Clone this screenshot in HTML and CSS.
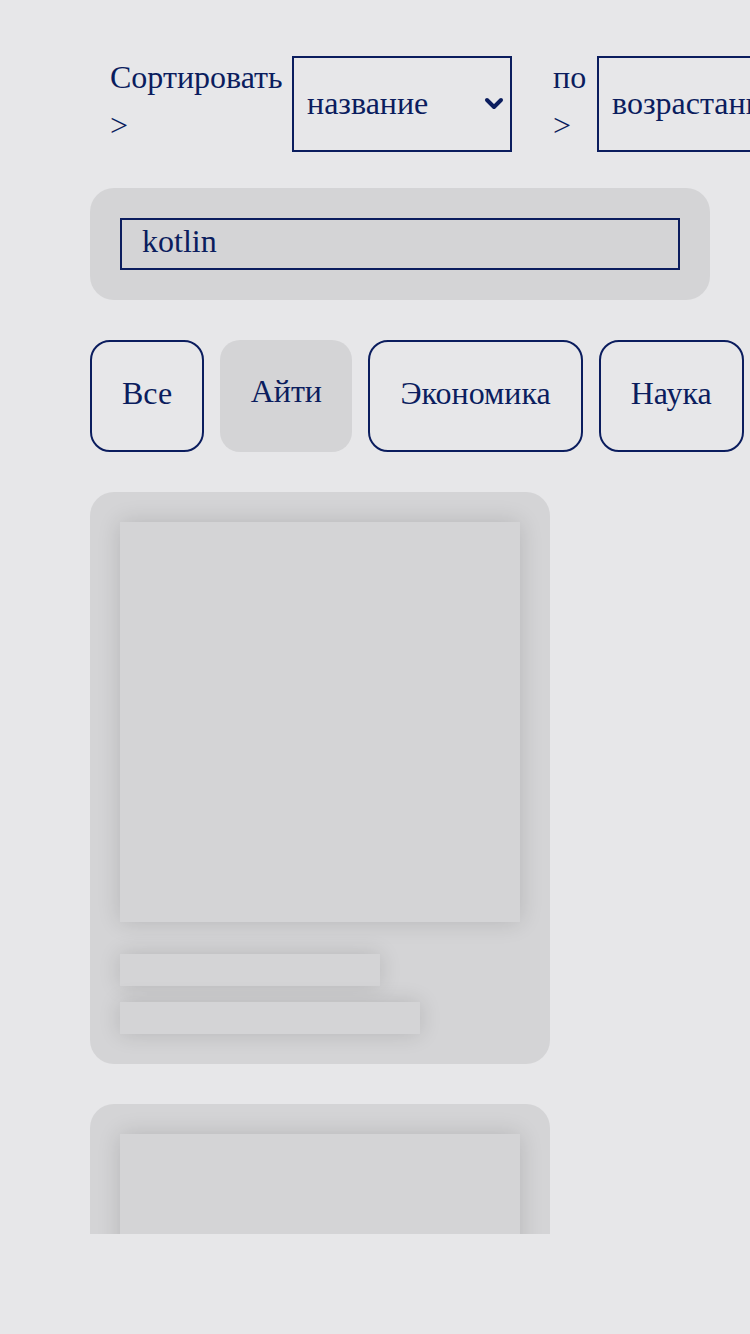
FILE: index.html
```html
<!DOCTYPE html>
<html lang="ru">
<head>
<meta charset="utf-8">
<title>Каталог</title>
<link rel="stylesheet" href="styles.css">
</head>
<body>
<div class="page">
  <div class="sort-row">
    <label class="sort-label">Сортировать &gt;</label>
    <div class="select-wrap">
      <select class="sort-select">
        <option>название</option>
      </select>
      <svg class="chevron" width="20" height="14" viewBox="0 0 20 14"><polyline points="3,3 10,10 17,3" fill="none" stroke="#0b1d5e" stroke-width="4" stroke-linecap="round" stroke-linejoin="round"/></svg>
    </div>
    <label class="sort-label sort-label--second">по &gt;</label>
    <div class="select-wrap">
      <select class="sort-select">
        <option>возрастанию</option>
      </select>
    </div>
  </div>

  <div class="search">
    <input class="search-input" type="text" value="kotlin">
  </div>

  <div class="chips">
    <button class="chip">Все</button>
    <button class="chip chip--active">Айти</button>
    <button class="chip">Экономика</button>
    <button class="chip">Наука</button>
  </div>

  <div class="card">
    <div class="card-image"></div>
    <div class="card-line card-line--short"></div>
    <div class="card-line card-line--long"></div>
  </div>

  <div class="card">
    <div class="card-image"></div>
    <div class="card-line card-line--short"></div>
    <div class="card-line card-line--long"></div>
  </div>
</div>
</body>
</html>
```

FILE: styles.css
```css
html, body {
  margin: 0;
  padding: 0;
  background: #e7e7e9;
  overflow: hidden;
}

body {
  font-family: "Liberation Serif", "Times New Roman", serif;
  font-size: 32px;
  color: #0b1d5e;
  width: 750px;
  height: 1334px;
}

.page {
  box-sizing: border-box;
  height: 1234px;
  overflow: hidden;
  padding: 56px 0 0 90px;
}

.sort-row {
  display: flex;
  align-items: flex-start;
  width: 900px;
}

.sort-label {
  display: block;
  line-height: 48px;
  margin: -3px 9px 0 20px;
  width: 173px;
  flex-shrink: 0;
}

.sort-label--second {
  width: 34px;
  margin: -3px 10px 0 41px;
}

.select-wrap {
  position: relative;
  flex-shrink: 0;
}

.sort-select {
  -webkit-appearance: none;
  appearance: none;
  box-sizing: border-box;
  width: 220px;
  height: 96px;
  border: 2px solid #0b1d5e;
  border-radius: 0;
  background: transparent;
  font-family: inherit;
  font-size: 32px;
  color: #0b1d5e;
  padding: 0 12px 2px 13px;
  margin: 0;
}

.chevron {
  position: absolute;
  right: 8px;
  top: 41px;
  pointer-events: none;
}

.search {
  box-sizing: border-box;
  width: 620px;
  margin-top: 36px;
  padding: 30px;
  background: #d4d4d6;
  border-radius: 24px;
}

.search-input {
  box-sizing: border-box;
  display: block;
  width: 100%;
  height: 52px;
  border: 2px solid #0b1d5e;
  background: transparent;
  font-family: inherit;
  font-size: 32px;
  color: #0b1d5e;
  padding: 0 20px 6px;
  margin: 0;
  outline: none;
}

.chips {
  display: flex;
  gap: 16px;
  margin-top: 40px;
  width: 700px;
}

.chip {
  flex-shrink: 0;
  box-sizing: border-box;
  height: 112px;
  padding: 0 30px 6px;
  border: 2px solid #0b1d5e;
  border-radius: 20px;
  background: transparent;
  font-family: inherit;
  font-size: 32px;
  color: #0b1d5e;
}

.chip--active {
  border: none;
  background: #d4d4d6;
  padding: 0 30.5px 10px;
}

.card {
  box-sizing: border-box;
  width: 460px;
  margin-top: 40px;
  padding: 30px;
  background: #d4d4d6;
  border-radius: 24px;
}

.card-image {
  width: 400px;
  height: 400px;
  background: #d4d4d6;
  box-shadow: 0 0 22px rgba(0, 0, 0, 0.14);
}

.card-line {
  height: 32px;
  background: #d4d4d6;
  box-shadow: 0 0 22px rgba(0, 0, 0, 0.14);
}

.card-line--short {
  width: 260px;
  margin-top: 32px;
}

.card-line--long {
  width: 300px;
  margin-top: 16px;
}
```
